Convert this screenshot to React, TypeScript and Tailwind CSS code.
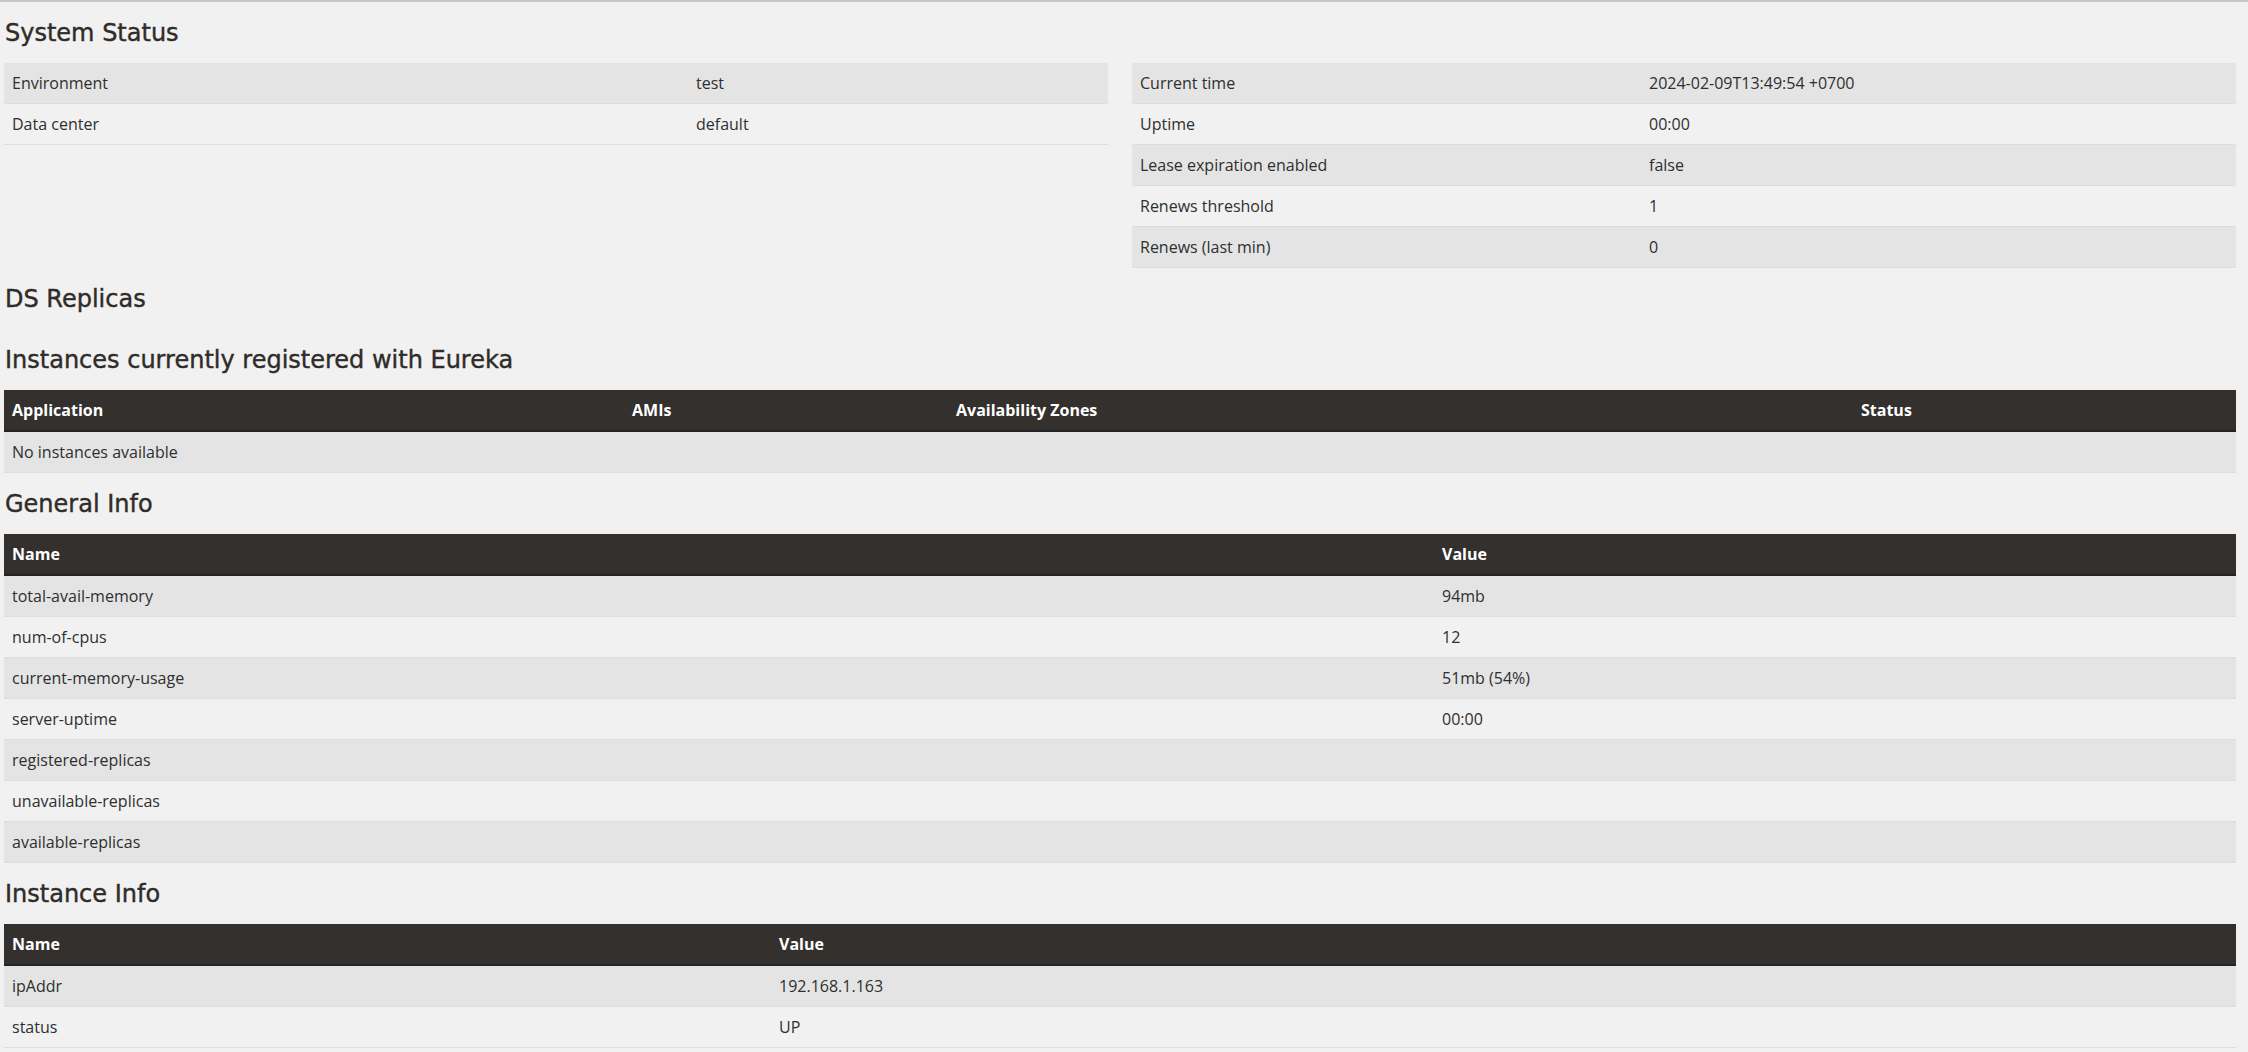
import React from "react";

function Heading({ children }: { children: React.ReactNode }) {
  return (
    <h2 className="h-[61px] flex items-center pl-[1px] text-[24px] leading-none text-[#2f2c29] font-['DejaVu_Sans',sans-serif] [-webkit-text-stroke:0.4px_#2f2c29]">
      {children}
    </h2>
  );
}

type Row = string[];

function KVTable({ rows, cols }: { rows: Row[]; cols: string }) {
  return (
    <div className="w-full">
      {rows.map((r, i) => (
        <div
          key={i}
          className={`grid ${cols} h-[41px] items-center border-b border-[#dddddd] ${
            i % 2 === 0 ? "bg-[#e4e4e4]" : ""
          }`}
        >
          {r.map((c, j) => (
            <div key={j} className="px-2 pb-[1px] whitespace-nowrap">
              {c}
            </div>
          ))}
        </div>
      ))}
    </div>
  );
}

function DataTable({
  head,
  rows,
  cols,
}: {
  head: string[];
  rows: Row[];
  cols: string;
}) {
  return (
    <div className="w-full">
      <div
        className={`grid ${cols} h-[42px] items-center bg-[#34302d] border-b-2 border-[#212326] text-white font-bold`}
      >
        {head.map((h, j) => (
          <div key={j} className="px-2 whitespace-nowrap">
            {h}
          </div>
        ))}
      </div>
      {rows.map((r, i) => (
        <div
          key={i}
          className={`grid ${cols} h-[41px] items-center border-b border-[#dddddd] ${
            i % 2 === 0 ? "bg-[#e4e4e4]" : ""
          }`}
        >
          {r.map((c, j) => (
            <div key={j} className="px-2 pb-[1px] whitespace-nowrap">
              {c}
            </div>
          ))}
        </div>
      ))}
    </div>
  );
}

export default function App() {
  return (
    <div className="min-h-screen bg-[#f1f1f1] border-t-2 border-[#c6c6c6] pl-[4px] pr-[12px] text-[16px] text-[#2f2f2f] font-['Open_Sans',sans-serif]">
      <Heading>System Status</Heading>
      <div className="grid grid-cols-2 gap-6 items-start">
        <KVTable
          cols="grid-cols-[684px_1fr]"
          rows={[
            ["Environment", "test"],
            ["Data center", "default"],
          ]}
        />
        <KVTable
          cols="grid-cols-[509px_1fr]"
          rows={[
            ["Current time", "2024-02-09T13:49:54 +0700"],
            ["Uptime", "00:00"],
            ["Lease expiration enabled", "false"],
            ["Renews threshold", "1"],
            ["Renews (last min)", "0"],
          ]}
        />
      </div>
      <Heading>DS Replicas</Heading>
      <Heading>Instances currently registered with Eureka</Heading>
      <DataTable
        cols="grid-cols-[620px_324px_905px_1fr]"
        head={["Application", "AMIs", "Availability Zones", "Status"]}
        rows={[["No instances available", "", "", ""]]}
      />
      <Heading>General Info</Heading>
      <DataTable
        cols="grid-cols-[1430px_1fr]"
        head={["Name", "Value"]}
        rows={[
          ["total-avail-memory", "94mb"],
          ["num-of-cpus", "12"],
          ["current-memory-usage", "51mb (54%)"],
          ["server-uptime", "00:00"],
          ["registered-replicas", ""],
          ["unavailable-replicas", ""],
          ["available-replicas", ""],
        ]}
      />
      <Heading>Instance Info</Heading>
      <DataTable
        cols="grid-cols-[767px_1fr]"
        head={["Name", "Value"]}
        rows={[
          ["ipAddr", "192.168.1.163"],
          ["status", "UP"],
        ]}
      />
    </div>
  );
}
